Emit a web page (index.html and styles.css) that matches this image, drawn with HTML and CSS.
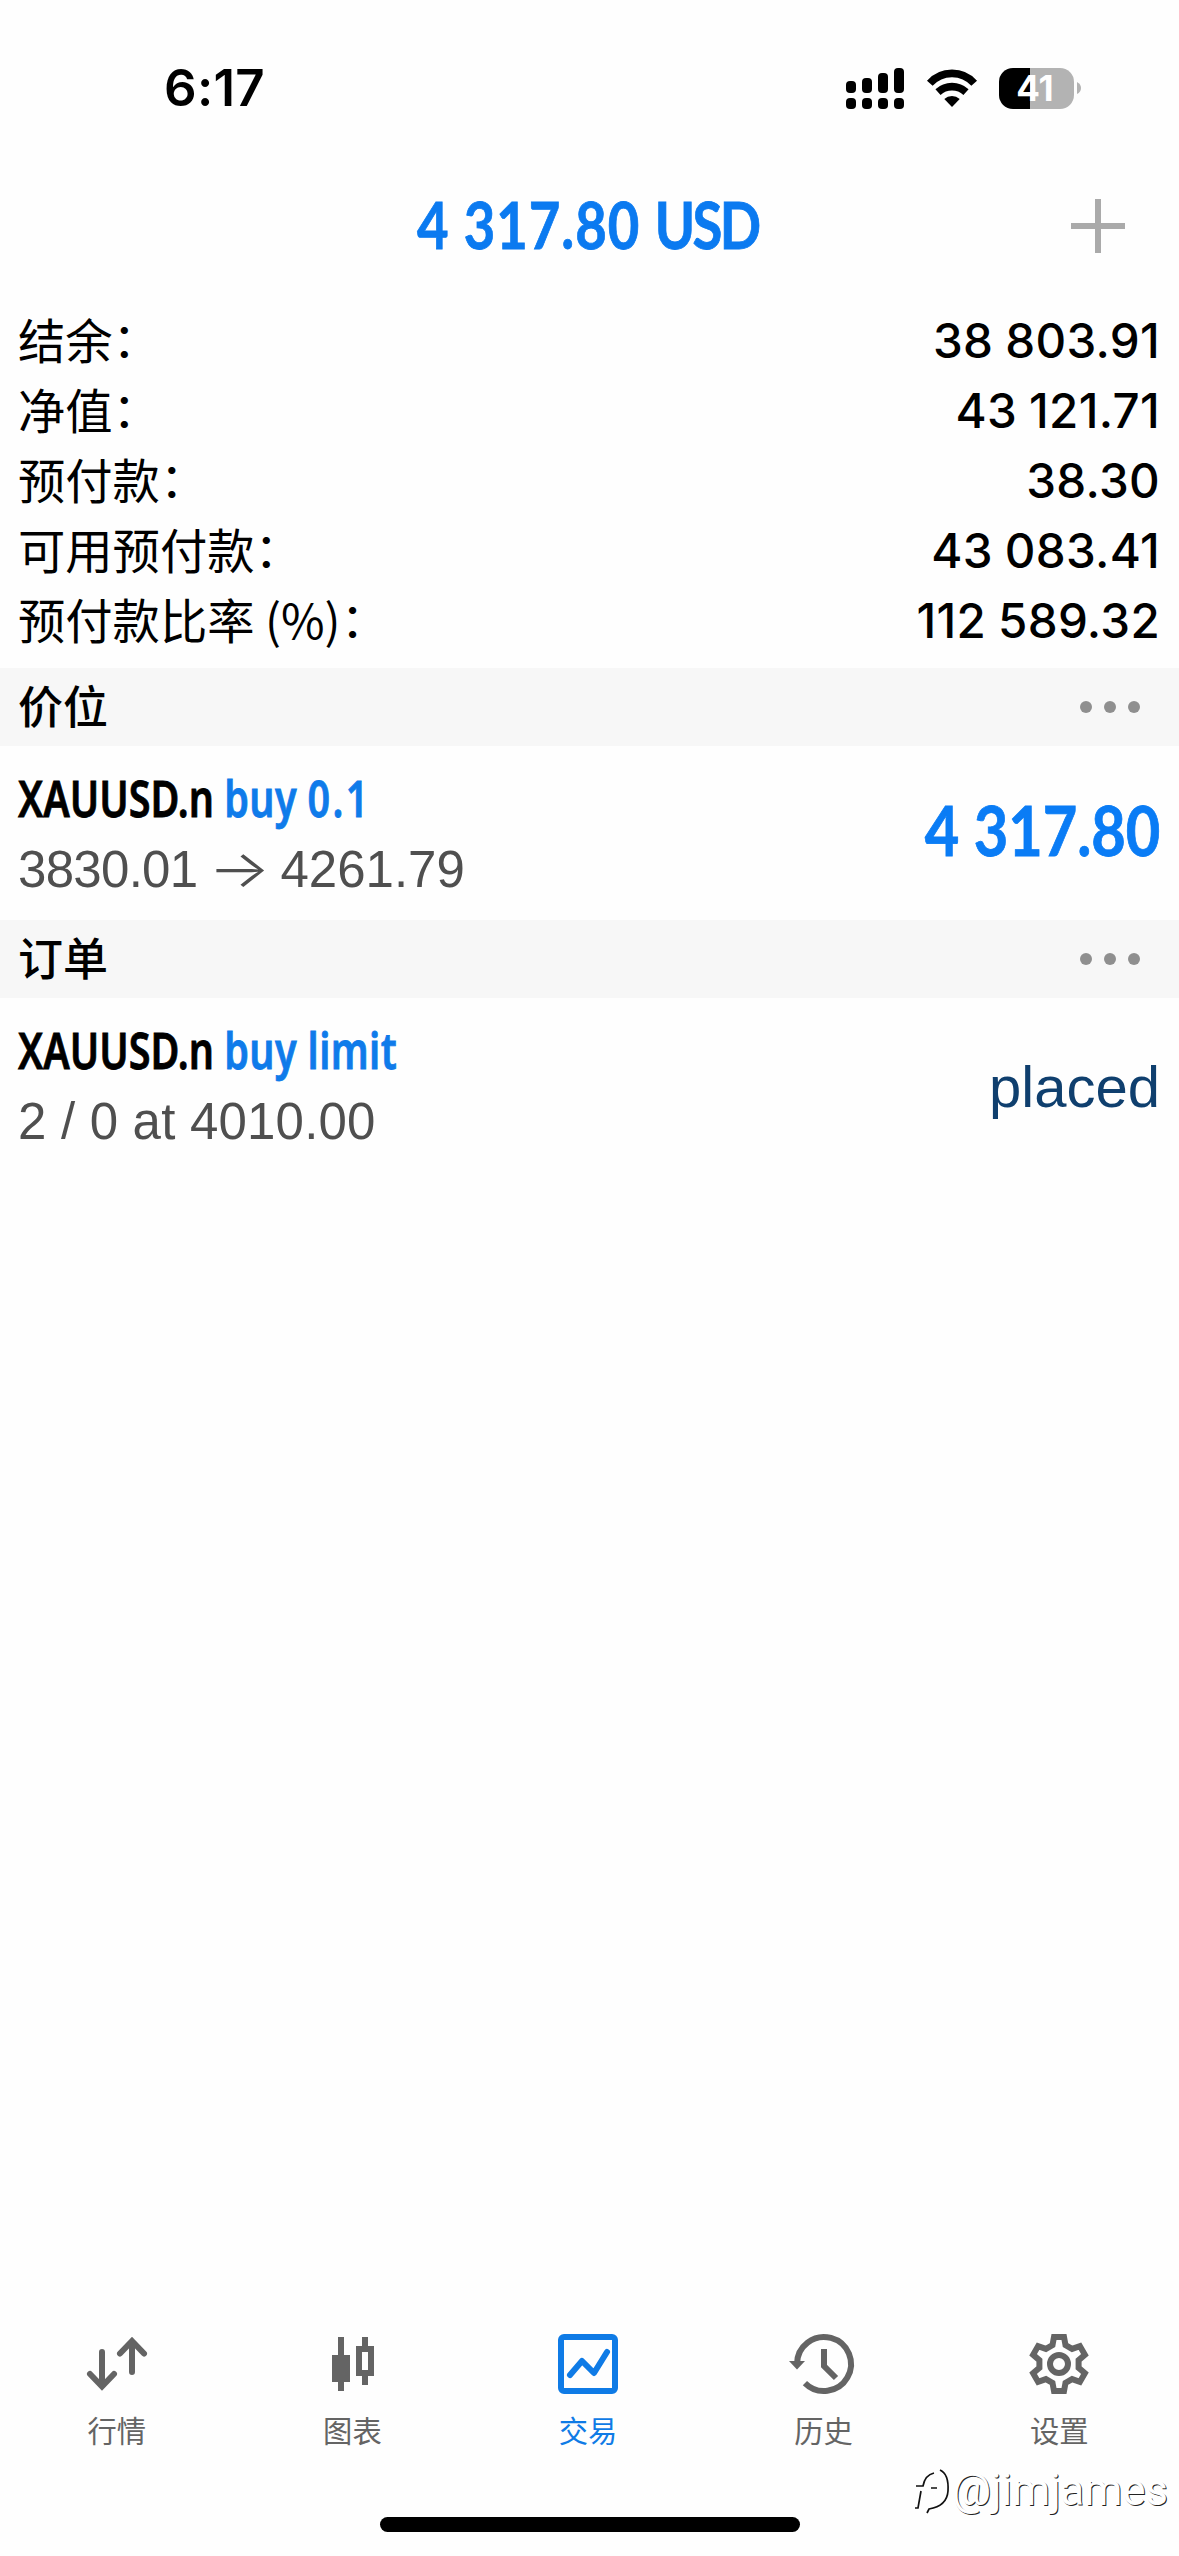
FILE: index.html
```html
<!DOCTYPE html>
<html lang="zh-CN">
<head>
<meta charset="utf-8">
<title>交易</title>
<link rel="stylesheet" href="styles.css">
</head>
<body>
<div class="screen">
  <header class="status">
    <span class="clock">6:17</span>
    <div class="status-icons">
      <svg class="signal" width="58" height="41" viewBox="0 0 58 41">
        <rect x="0" y="13" width="10" height="12" rx="4"/><rect x="16" y="10" width="10" height="15" rx="4"/><rect x="32" y="5" width="10" height="20" rx="4"/><rect x="48" y="0" width="10" height="25" rx="4"/>
        <rect x="0" y="30" width="10" height="11" rx="4"/><rect x="16" y="30" width="10" height="11" rx="4"/><rect x="32" y="30" width="10" height="11" rx="4"/><rect x="48" y="30" width="10" height="11" rx="4"/>
      </svg>
      <svg class="wifi" width="50" height="41" viewBox="0 0 50 41">
        <path d="M2.8 15.3A29.8 29.8 0 0 1 47.2 15.3M11 24.1A20.6 20.6 0 0 1 39 24.1" fill="none" stroke="#000" stroke-width="7.6"/>
        <path d="M25 39 17.3 31A11.5 11.5 0 0 1 32.7 31Z"/>
      </svg>
      <div class="battery"><span class="cell">41</span><svg width="4" height="12" viewBox="0 0 4 12"><path d="M0 0Q4 2 4 6T0 12Z" fill="#b3b3b3"/></svg></div>
    </div>
  </header>

  <nav class="topbar">
    <h1 class="total cond">4 317.80 <span class="currency">USD</span></h1>
    <svg class="plus" width="54" height="54" viewBox="0 0 54 54"><path d="M27 0V54M0 27H54" stroke="#aaa" stroke-width="6"/></svg>
  </nav>

  <dl class="summary">
    <div class="line"><dt>结余<i>：</i></dt><dd>38 803.91</dd></div>
    <div class="line"><dt>净值<i>：</i></dt><dd>43 121.71</dd></div>
    <div class="line"><dt>预付款<i>：</i></dt><dd>38.30</dd></div>
    <div class="line"><dt>可用预付款<i>：</i></dt><dd>43 083.41</dd></div>
    <div class="line"><dt>预付款比率 (%)<i>：</i></dt><dd>112 589.32</dd></div>
  </dl>

  <section>
    <div class="section-head"><h2>价位</h2><span class="more"><b></b><b></b><b></b></span></div>
    <div class="row">
      <div class="info">
        <p class="name">XAUUSD.n <span class="side">buy <span class="qty">0.1</span></span></p>
        <p class="detail range"><span class="open">3830.01</span> <span class="arrow">→</span> 4261.79</p>
      </div>
      <span class="profit cond">4 317.80</span>
    </div>
  </section>

  <section>
    <div class="section-head"><h2>订单</h2><span class="more"><b></b><b></b><b></b></span></div>
    <div class="row order">
      <div class="info">
        <p class="name">XAUUSD.n <span class="side">buy limit</span></p>
        <p class="detail">2 / 0 at 4010.00</p>
      </div>
      <span class="state">placed</span>
    </div>
  </section>

  <nav class="tabs">
    <a class="tab">
      <svg width="66" height="60" viewBox="-33 -30 66 60" fill="none" stroke="#646464" stroke-width="6" stroke-linecap="round" stroke-linejoin="miter"><path d="M-15-12V22M-27 10-15 22.500-3 10M15 8V-22M3-10.500 15-23 27-10.500"/></svg>
      <span>行情</span>
    </a>
    <a class="tab">
      <svg width="66" height="60" viewBox="-33 -30 66 60" fill="#646464"><path d="M-14-27h6v18h6V18h-6v9h-6V18h-6V-9h6z"/><path fill-rule="evenodd" d="M10-27h6v9h6V12h-6v9h-6V12H4V-18h6zM10-12V6h6V-12z"/></svg>
      <span>图表</span>
    </a>
    <a class="tab active">
      <svg width="66" height="60" viewBox="-33 -30 66 60" fill="none" stroke="#0f7be6" stroke-width="6" stroke-linejoin="round" stroke-linecap="round"><rect x="-27" y="-27" width="54" height="54" rx="3"/><path d="M-18 11-6-3 6 9 19-12"/></svg>
      <span>交易</span>
    </a>
    <a class="tab">
      <svg width="66" height="60" viewBox="-33 -30 66 60" fill="none" stroke="#646464" stroke-width="6"><path d="M-27 0A27 27 0 1 1-19.100 19.100M0-15V2L12 14"/><path d="M-35-3h16l-8 8.500z" fill="#646464" stroke="none"/></svg>
      <span>历史</span>
    </a>
    <a class="tab">
      <svg width="66" height="60" viewBox="-33 -30 66 60" fill="none" stroke="#646464" stroke-width="6"><path d="M-5-27H5L6.500-18.900 13.100-15.100 20.900-17.900 25.900-9.200 19.600-3.800V3.800L25.900 9.200 20.900 17.900 13.100 15.100 6.500 18.900 5 27H-5L-6.500 18.900-13.100 15.100-20.900 17.900-25.900 9.200-19.600 3.800V-3.800L-25.900-9.200-20.900-17.900-13.100-15.100-6.500-18.900Z"/><circle r="9"/></svg>
      <span>设置</span>
    </a>
  </nav>

  <div class="home"></div>
  <div class="watermark">
    <svg width="38" height="46" viewBox="0 0 38 46" fill="none" stroke="#111" stroke-width="1.700"><path d="M20 5Q11 7 9 18H2M7 23 4 40H1M17 20H23M26 2Q35 6 34 23 33 38 15 41L13 45"/></svg>
    <span>@jimjames</span>
  </div>
</div>
</body>
</html>
```
FILE: styles.css
```css
* { box-sizing: border-box; }
body, h1, h2, p, dl, dd { margin: 0; }
body { background: #fefefe; color: #000; font-family: Inter, "Noto Sans CJK SC", sans-serif; }
.screen { position: relative; width: 1179px; height: 2556px; display: flex; flex-direction: column; overflow: hidden; }
svg { display: block; overflow: visible; flex: none; }

.status { height: 176px; padding: 0 98px 0 164px; display: flex; justify-content: space-between; align-items: center; }
.clock { font-size: 51px; font-weight: 600; line-height: 60px; letter-spacing: 0.3px; }
.status-icons { display: flex; gap: 22px; align-items: center; }
.signal { margin-right: 1px; }
.battery { display: flex; align-items: center; gap: 3px; }
.cell { width: 75px; height: 41px; padding-right: 3px; border-radius: 14px; background: linear-gradient(90deg, #000 31px, #b3b3b3 31px); color: #fff; font-size: 35px; font-weight: 700; line-height: 41px; text-align: center; }

.topbar { height: 99px; padding: 0 54px 0 108px; display: flex; align-items: center; }
.cond { font-family: Lato, sans-serif; font-weight: 700; white-space: nowrap; -webkit-text-stroke: 0.8px currentColor; }
.total { flex: 1; text-align: center; font-size: 65px; line-height: 80px; padding: 0 4px 4px 0; letter-spacing: 1.2px; color: #0b7af0; transform: scaleX(.837); }
.currency { letter-spacing: -3px; }

.summary { height: 393px; padding: 31px 19px 0 18px; }
.line { height: 70px; display: flex; justify-content: space-between; align-items: center; }
dt { font-family: "Noto Sans CJK SC", sans-serif; font-size: 47.3px; line-height: 66px; padding-bottom: 4px; }
dt i { font-style: normal; position: relative; top: -2px; }
dd { font-size: 47.5px; font-weight: 500; line-height: 70px; letter-spacing: 0.3px; word-spacing: -1px; }

.section-head { height: 78px; padding: 0 39px 0 18px; background: #f7f7f7; display: flex; justify-content: space-between; align-items: center; }
h2 { font: 500 45px/74px "Noto Sans CJK SC", sans-serif; padding-bottom: 4px; }
.more { display: flex; gap: 12px; }
.more b { width: 12px; height: 12px; border-radius: 50%; background: #8f8f8f; }
.row { height: 174px; padding: 18px 19px 0 18px; display: flex; justify-content: space-between; }
.name { font: 600 50px/68px "Noto Sans", sans-serif; white-space: nowrap; transform: scaleX(.79); transform-origin: left; -webkit-text-stroke: 0.8px currentColor; }
.side { color: #0f7bea; letter-spacing: 0.5px; }
.qty { letter-spacing: 3px; }
.detail { font: 51px/76px "Liberation Sans", sans-serif; color: #4f4f4f; white-space: nowrap; letter-spacing: 0.2px; }
.range { word-spacing: -3px; letter-spacing: 0; }
.open { letter-spacing: -0.7px; }
.arrow { display: inline-block; margin: 0 6px; font-family: Inter, sans-serif; font-weight: 300; line-height: 1; transform: scaleX(1.28); }
.profit { font-size: 68px; line-height: 132px; color: #0a7cf5; transform: scaleX(.875); transform-origin: right; }
.state { font: 58px/142px "Liberation Sans", sans-serif; color: #0f3f6e; }

.tabs { margin-top: auto; height: 222px; display: grid; grid-template-columns: repeat(5, 1fr); margin-right: 2px; margin-left: -1px; }
.tab { display: flex; flex-direction: column; align-items: center; gap: 13px; font: 29.300px/44px "Noto Sans CJK SC", sans-serif; color: #646464; }
.active { color: #0f7be6; }
.home { position: absolute; left: 380px; top: 2517px; width: 420px; height: 15px; border-radius: 8px; background: #000; }
.watermark { position: absolute; left: 914px; top: 2468px; display: flex; align-items: center; gap: 0; font: 43.500px/46px Roboto, sans-serif; color: #fff; text-shadow: 1px 1px 0 #222; }
```
